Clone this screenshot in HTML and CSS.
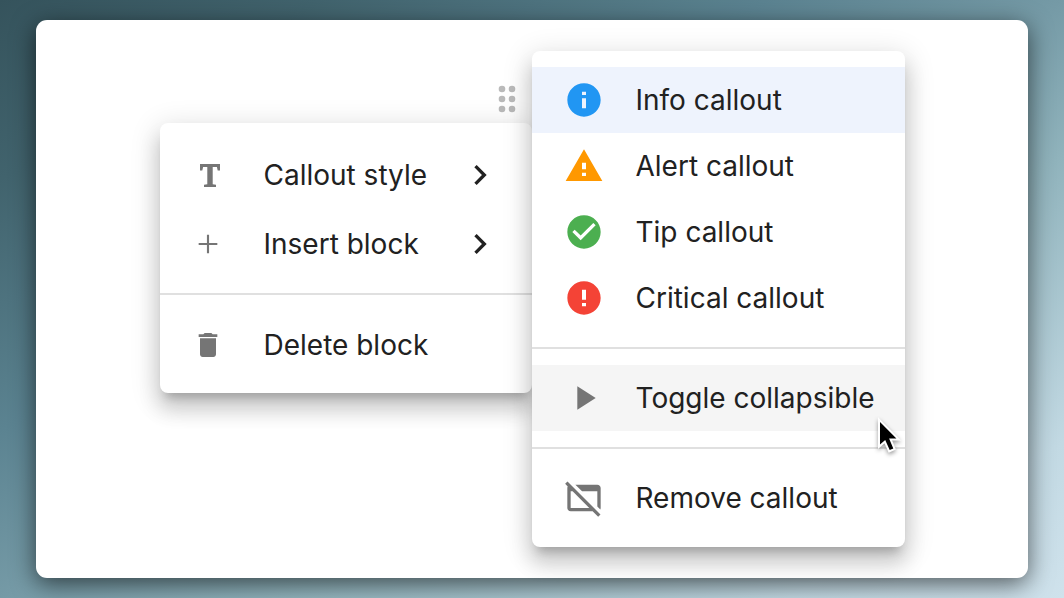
FILE: index.html
```html
<!DOCTYPE html>
<html lang="en">
<head>
<meta charset="utf-8">
<meta name="viewport" content="width=device-width, initial-scale=1">
<title>Callout menu</title>
<link rel="stylesheet" href="styles.css">
</head>
<body>
<main class="card">
  <div class="block-column">
    <button class="drag-handle" type="button" aria-label="Block actions">
      <svg class="dots" viewBox="0 0 18 28" aria-hidden="true">
        <circle cx="4" cy="4" r="3.3"/><circle cx="14" cy="4" r="3.3"/>
        <circle cx="4" cy="14" r="3.3"/><circle cx="14" cy="14" r="3.3"/>
        <circle cx="4" cy="24" r="3.3"/><circle cx="14" cy="24" r="3.3"/>
      </svg>
    </button>
    <div class="menu block-menu" role="menu" aria-label="Block">
      <button class="item" type="button" role="menuitem">
        <svg class="icon small gray" viewBox="0 0 32 32" aria-hidden="true"><path d="M8 5h20v6.500h-2.300l-.8-3.500h-4.200v17.300l3.300.5V28H12v-2.200l3.300-.5V8h-4.200l-.8 3.500H8z"/></svg>
        <span class="label">Callout style</span>
        <svg class="icon arrow" viewBox="0 0 24 24" aria-hidden="true"><path d="M10 6 8.590 7.410 13.170 12l-4.580 4.590L10 18l6-6z"/></svg>
      </button>
      <button class="item" type="button" role="menuitem">
        <svg class="icon small gray" viewBox="0 0 24 24" aria-hidden="true"><path d="M19 12.800h-6.200V19h-1.600v-6.200H5v-1.600h6.200V5h1.600v6.200H19z"/></svg>
        <span class="label">Insert block</span>
        <svg class="icon arrow" viewBox="0 0 24 24" aria-hidden="true"><path d="M10 6 8.590 7.410 13.170 12l-4.580 4.590L10 18l6-6z"/></svg>
      </button>
      <hr class="divider">
      <button class="item" type="button" role="menuitem">
        <svg class="icon small gray" viewBox="0 0 24 24" aria-hidden="true"><path d="M6 19c0 1.100.9 2 2 2h8c1.100 0 2-.9 2-2V7H6v12zM19 4h-3.500l-1-1h-5l-1 1H5v2h14V4z"/></svg>
        <span class="label">Delete block</span>
      </button>
    </div>
  </div>
  <div class="menu style-menu" role="menu" aria-label="Callout style">
    <button class="item selected" type="button" role="menuitem">
      <svg class="icon info" viewBox="0 0 24 24" aria-hidden="true"><path d="M12 2C6.480 2 2 6.480 2 12s4.480 10 10 10 10-4.480 10-10S17.520 2 12 2zm1.200 15h-2.400v-6h2.400v6zm0-8h-2.400V7h2.400v2z"/></svg>
      <span class="label">Info callout</span>
    </button>
    <button class="item" type="button" role="menuitem">
      <svg class="icon alert" viewBox="0 0 24 24" aria-hidden="true"><path d="M1 21h22L12 2 1 21zm12.200-3h-2.400v-2h2.400v2zm0-4h-2.400v-4h2.400v4z"/></svg>
      <span class="label">Alert callout</span>
    </button>
    <button class="item" type="button" role="menuitem">
      <svg class="icon tip" viewBox="0 0 24 24" aria-hidden="true"><path d="M12 2C6.480 2 2 6.480 2 12s4.480 10 10 10 10-4.480 10-10S17.520 2 12 2zm-2 15-5-5 1.410-1.410L10 14.170l7.590-7.590L19 8l-9 9z"/></svg>
      <span class="label">Tip callout</span>
    </button>
    <button class="item" type="button" role="menuitem">
      <svg class="icon critical" viewBox="0 0 24 24" aria-hidden="true"><path d="M12 2C6.480 2 2 6.480 2 12s4.480 10 10 10 10-4.480 10-10S17.520 2 12 2zm1.200 15h-2.400v-2h2.400v2zm0-4h-2.400V7h2.400v6z"/></svg>
      <span class="label">Critical callout</span>
    </button>
    <hr class="divider">
    <button class="item hovered" type="button" role="menuitem">
      <svg class="icon gray" viewBox="0 0 24 24" aria-hidden="true"><path d="M8 5v14l11-7z"/></svg>
      <span class="label">Toggle collapsible</span>
      <svg class="pointer" viewBox="0 0 24 36" aria-hidden="true"><path d="M3 4v22.500l5.200-4.500 4.500 10 3.600-1.600-4.200-9.900h7.300z"/></svg>
    </button>
    <hr class="divider">
    <button class="item" type="button" role="menuitem">
      <svg class="icon gray" viewBox="0 0 24 24" aria-hidden="true"><path d="M6.830 4H20c1.110 0 2 .9 2 2v12c0 .34-.09.66-.23.94L20 17.170V8h-9.170l-4-4zm13.660 19.310L17.170 20H4c-1.110 0-2-.9-2-2V6c0-.34.080-.66.230-.94L.69 3.510 2.100 2.100l19.800 19.800-1.410 1.410zM15.170 18l-10-10H4v10h11.170z"/></svg>
      <span class="label">Remove callout</span>
    </button>
  </div>
</main>
</body>
</html>
```
FILE: styles.css
```css
* {
  box-sizing: border-box;
}

body {
  margin: 0;
  min-height: 100vh;
  padding: 20px 36px;
  display: flex;
  background: linear-gradient(to bottom right, #35535c 0%, #41636d 15%, #5b8391 36%, #759aa6 50%, #90b3bc 63%, #c2d9e3 87%, #cfe2ec 100%);
  font-family: Inter, "Open Sans", sans-serif;
  color: #212121;
}

.card {
  flex: 1;
  display: flex;
  justify-content: center;
  align-items: flex-start;
  padding: 31px 24px;
  background: #fff;
  border-radius: 11px;
  box-shadow: 0 6px 24px rgba(0, 0, 0, .6);
}

.block-column {
  display: flex;
  flex-direction: column;
  width: 372px;
  padding-top: 34px;
}

.drag-handle {
  align-self: flex-end;
  margin: 0 16px 10px 0;
  padding: 0;
  border: 0;
  background: none;
}

.dots {
  display: block;
  width: 18px;
  height: 28px;
  fill: #bababa;
}

.menu {
  display: flex;
  flex-direction: column;
  background: #fff;
  border-radius: 8px;
  box-shadow:
    0 10px 10px -6px rgba(0, 0, 0, .2),
    0 16px 20px 2px rgba(0, 0, 0, .14),
    0 6px 28px 4px rgba(0, 0, 0, .12);
}

.block-menu {
  padding: 17px 0 14px;
}

.style-menu {
  position: relative;
  width: 373px;
  padding: 16px 0;
}

.item {
  position: relative;
  display: flex;
  align-items: center;
  gap: 32px;
  width: 100%;
  height: 66px;
  padding: 0 32px;
  border: 0;
  background: none;
  color: inherit;
  font: 400 28px/40px Inter, "Open Sans", sans-serif;
  text-align: left;
  white-space: nowrap;
}

.block-menu .item {
  height: 69px;
}

.label {
  flex: 1;
}

.selected {
  background: #eef3fd;
}

.hovered {
  background: #f5f5f5;
}

.divider {
  width: 100%;
  height: 2px;
  margin: 16px 0;
  border: 0;
  background: #e0e0e0;
}

.block-menu .divider {
  margin: 15px 0;
}

.icon {
  flex: none;
  width: 40px;
  height: 40px;
}

.small {
  width: 32px;
  height: 32px;
  margin-right: 8px;
}

.gray { fill: #757575; }
.arrow { fill: #212121; }
.info { fill: #2196f3; }
.alert { fill: #ff9800; }
.tip { fill: #4caf50; }
.critical { fill: #f44336; }

.pointer {
  position: absolute;
  right: 4px;
  bottom: -23px;
  z-index: 1;
  width: 24px;
  height: 36px;
  fill: #000;
  stroke: #fff;
  stroke-width: 4px;
  paint-order: stroke;
  overflow: visible;
  filter: drop-shadow(0 2px 2px rgba(0, 0, 0, .4));
}
```
